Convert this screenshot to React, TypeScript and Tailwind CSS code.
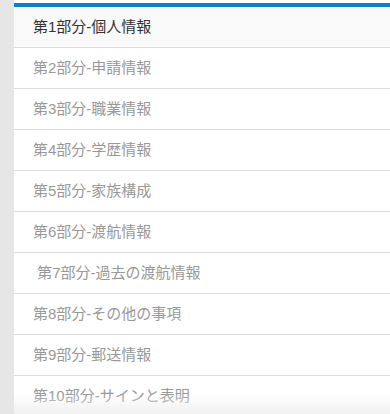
import React from "react";

const items = [
  "第1部分-個人情報",
  "第2部分-申請情報",
  "第3部分-職業情報",
  "第4部分-学歴情報",
  "第5部分-家族構成",
  "第6部分-渡航情報",
  "\u00a0第7部分-過去の渡航情報",
  "第8部分-その他の事項",
  "第9部分-郵送情報",
  "第10部分-サインと表明",
];

export default function App() {
  return (
    <div
      className="relative flex h-[414px] w-[390px] overflow-hidden bg-white"
      style={{ fontFamily: '"Liberation Sans", "Noto Sans CJK JP", sans-serif' }}
    >
      <div className="w-[14px] shrink-0 bg-[#e6e6e6]" />
      <div className="flex-1 pt-[3px]">
        <div className="border-t-4 border-[#0a7cd2]">
          {items.map((t, i) => (
            <div
              key={i}
              className={`flex h-[41px] items-center border-b border-[#dddddd] pl-[19px] text-[15px] ${
                i === 0 ? "bg-[#f9f9f9] text-[#333333]" : "bg-white text-[#999999]"
              }`}
            >
              {t}
            </div>
          ))}
        </div>
      </div>
      <div className="pointer-events-none absolute bottom-0 left-[14px] right-0 h-[20px] bg-gradient-to-b from-transparent to-[#f0f0f0]" />
    </div>
  );
}
